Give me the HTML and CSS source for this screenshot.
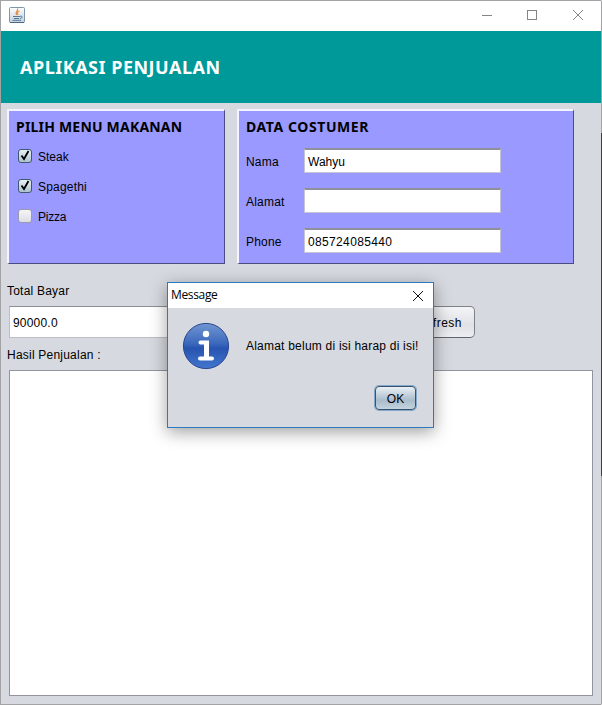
FILE: index.html
```html
<!DOCTYPE html>
<html lang="id">
<head>
<meta charset="utf-8">
<title>Aplikasi Penjualan</title>
<link rel="stylesheet" href="styles.css">
</head>
<body>
<div class="window">
  <div class="titlebar">
    <svg class="java" width="16" height="16" viewBox="0 0 16 16">
      <defs><linearGradient id="jb" x1="0" y1="0" x2="0" y2="1"><stop offset="0" stop-color="#fdfdfd"/><stop offset="1" stop-color="#c3d0dc"/></linearGradient></defs>
      <rect x=".5" y=".5" width="15" height="15" rx="1" fill="url(#jb)" stroke="#8195a8"/>
      <path d="M1 15.500H15" stroke="#4d6780"/>
      <path d="M8.500 1.500C10 3.500 5.500 4.500 7.500 8M10.500 4C8 5 8 6 9 8" fill="none" stroke="#e58a3c" stroke-width="1.200"/>
      <path d="M4 9.500H11M5 11.500H10M3.500 13.300H12M11 9.300C14 8.500 13.500 11.300 11 11.500" fill="none" stroke="#557a99"/>
    </svg>
    <svg class="controls" width="102" height="12" viewBox="0 0 102 12" fill="none" stroke="#858585">
      <path d="M0 6.500H10"/><rect x="45.500" y="1.500" width="9" height="9"/><path d="M91 1L101 11M101 1L91 11"/>
    </svg>
  </div>
  <div class="header"><h1>APLIKASI PENJUALAN</h1></div>
  <div class="panels">
    <div class="panel menu">
      <h2>PILIH MENU MAKANAN</h2>
      <div class="check"><svg class="box on" width="14" height="14" viewBox="0 0 12 12"><path d="M2.500 5.500L5 9L9.500 1" fill="none" stroke="#000" stroke-width="1.800"/></svg><span>Steak</span></div>
      <div class="check"><svg class="box on" width="14" height="14" viewBox="0 0 12 12"><path d="M2.500 5.500L5 9L9.500 1" fill="none" stroke="#000" stroke-width="1.800"/></svg><span class="wide">Spagethi</span></div>
      <div class="check"><svg class="box" width="14" height="14" viewBox="0 0 12 12"></svg><span class="narrow">Pizza</span></div>
    </div>
    <div class="panel data">
      <h2 class="costumer">DATA COSTUMER</h2>
      <div class="row"><span class="name wide">Nama</span><span class="field">Wahyu</span></div>
      <div class="row"><span class="name wide">Alamat</span><span class="field"></span></div>
      <div class="row"><span class="name wide">Phone</span><span class="field phone">085724085440</span></div>
    </div>
  </div>
  <div class="label total-label">Total Bayar</div>
  <div class="total-row"><div class="total">90000.0</div><div class="refresh">Refresh</div></div>
  <div class="label hasil">Hasil Penjualan :</div>
  <div class="output"></div>
</div>
<div class="dialog">
  <div class="dialog-title"><span>Message</span>
    <svg width="12" height="12" viewBox="0 0 12 12" fill="none" stroke="#111"><path d="M1 1L11 11M11 1L1 11"/></svg>
  </div>
  <div class="dialog-body">
    <svg width="48" height="48" viewBox="0 0 48 48">
      <defs><linearGradient id="ib" x1="0" y1="0" x2="0" y2="1"><stop offset="0" stop-color="#7296d2"/><stop offset=".45" stop-color="#3b68bd"/><stop offset=".55" stop-color="#2754b0"/><stop offset="1" stop-color="#4277cf"/></linearGradient></defs>
      <circle cx="24" cy="24" r="22.600" fill="url(#ib)" stroke="#2b478c"/>
      <circle cx="24" cy="12" r="3.200" fill="#fff"/>
      <path d="M18.500 20.500H25V36M18 36.500H30" fill="none" stroke="#fff" stroke-width="4" stroke-linecap="round"/>
      <path d="M24.500 20V36" stroke="#fff" stroke-width="5"/>
    </svg>
    <span class="message">Alamat belum di isi harap di isi!</span>
  </div>
  <div class="actions"><div class="ok">OK</div></div>
</div>
</body>
</html>
```
FILE: styles.css
```css
* { box-sizing: border-box; }
body { margin: 0; width: 602px; height: 705px; overflow: hidden; position: relative; font: 12px/16px "Liberation Sans", Arial, sans-serif; color: #000; }
.window { height: 705px; border: 1px solid #a3a3a5; border-right-color: transparent; background: linear-gradient(#d6d9df, #d6d9df) padding-box, linear-gradient(#a3a3a5 133px, #404044 133px, #404044 476px, #a3a3a5 476px) border-box; }
.titlebar { height: 30px; background: #fff; display: flex; justify-content: space-between; padding: 6px 17px 0 8px; }
.controls { margin-top: 2px; }
.header { height: 72px; background: #009999; padding: 24px 0 0 19px; }
h1 { margin: 0; color: #fff; font: bold 18px/24px "Noto Sans", sans-serif; letter-spacing: .5px; white-space: nowrap; }
.panels { display: flex; gap: 12px; padding: 6px 0 0 6px; }
.panel { height: 155px; background: #9999ff; border: 2px solid #f4f4ff; border-right: 1px solid #4c4c85; border-bottom: 1px solid #4c4c85; padding: 7px; }
.menu { width: 218px; }
.data { width: 337px; }
h2 { margin: 0 0 12px; font: bold 14px/18px "Noto Sans", sans-serif; letter-spacing: .2px; white-space: nowrap; }
.check { height: 16px; margin-left: 2px; display: flex; align-items: center; gap: 6px; }
.check span { padding-top: 1px; }
.check + .check { margin-top: 14px; }
.box { border: 1px solid #9b9bb0; border-radius: 3px; background: linear-gradient(#f5f5f7, #dddde5); }
.box.on { border-color: #3d5870; background: linear-gradient(#e9f1f4, #adc3ce); }
.wide { letter-spacing: .2px; }
.narrow { letter-spacing: -.25px; }
.row { height: 25px; display: flex; align-items: center; margin-bottom: 15px; }
.costumer { letter-spacing: .58px; }
.name { width: 58px; padding-top: 2px; }
.field { width: 197px; height: 25px; background: #fff; border: 1px solid #c4c5d5; border-top: 2px solid #8f909b; padding: 4px 3px 0; }
.phone { letter-spacing: .35px; }
.label { padding-left: 6px; letter-spacing: .22px; }
.total-label { margin-top: 19px; }
.total-row { display: flex; margin: 7px 0 0 8px; }
.total { width: 300px; height: 32px; background: #fff; border: 1px solid #bdbec4; border-top-color: #8d8e95; padding: 8px 3px; letter-spacing: .2px; }
.refresh { width: 75px; height: 32px; margin-left: 91px; border: 1px solid #7e8188; border-bottom-color: #5f636b; border-radius: 5px; background: linear-gradient(#f4f5f7, #dfe1e6 60%, #edeef1); padding: 8px 12px 0 0; text-align: right; letter-spacing: .5px; }
.hasil { margin-top: 9px; }
.output { width: 584px; height: 326px; margin: 7px 0 0 8px; background: #fff; border: 1px solid #92959f; }
.dialog { position: absolute; left: 167px; top: 282px; width: 267px; height: 146px; border: 1px solid #2b7ac0; background: #d6d9df; box-shadow: 0 4px 16px rgba(0,0,0,.38); }
.dialog-title { height: 25px; background: #fff; display: flex; justify-content: space-between; align-items: center; padding: 0 9px 0 3px; font-family: "Open Sans", sans-serif; font-size: 12px; letter-spacing: -.35px; }
.dialog-title span { padding-bottom: 1px; }
.dialog-body { display: flex; align-items: center; gap: 16px; padding: 14px 0 0 14px; height: 62px; }
.message { white-space: nowrap; letter-spacing: .22px; }
.actions { display: flex; justify-content: flex-end; padding: 16px 17px 0 0; }
.ok { width: 41px; height: 24px; border: 1px solid #38536e; border-radius: 4px; box-shadow: 0 0 0 1px #82a9cc; background: linear-gradient(#eaf0f5, #a9bccb 60%, #c3d3df); text-align: center; line-height: 24px; }
```
